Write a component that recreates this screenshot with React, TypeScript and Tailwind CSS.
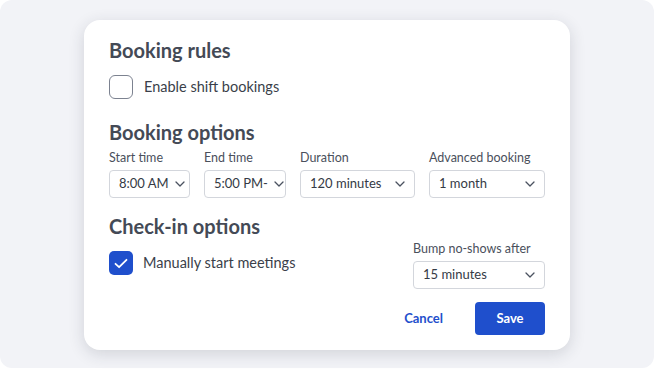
import React from "react";

function Chevron() {
	return (
		<svg width="10" height="6" viewBox="0 0 10 6" fill="none" className="shrink-0">
			<path d="M1 1l4 4 4-4" stroke="#4b5260" strokeWidth="1.3" strokeLinecap="round" strokeLinejoin="round" />
		</svg>
	);
}

function Select({ value, width }: { value: string; width: string }) {
	return (
		<div
			className={`${width} h-[28px] flex items-center justify-between gap-[6px] pl-[9px] pr-[9px] border border-[#d3d6dc] rounded-[4px] bg-white text-[13px] text-[#343a45]`}
		>
			<span className="whitespace-nowrap">{value}</span>
			<Chevron />
		</div>
	);
}

function Field({ label, value, width }: { label: string; value: string; width: string }) {
	return (
		<div className="flex flex-col gap-[4px]">
			<span className="text-[12.5px] leading-[16px] text-[#4a505c]">{label}</span>
			<Select value={value} width={width} />
		</div>
	);
}

export default function App() {
	return (
		<div className="w-[654px] h-[381px] bg-white" style={{ fontFamily: "Lato, 'Noto Sans', sans-serif" }}>
			<div className="h-[368px] bg-[#f2f3f7] rounded-[12px] pl-[84px] pt-[20px]">
				<div className="w-[486px] h-[330px] bg-white rounded-[16px] shadow-[0_4px_16px_rgba(40,45,60,0.16)] px-[25px] pt-[18px] flex flex-col">
					<h2 className="text-[20px] leading-[24px] font-bold text-[#444a56]">Booking rules</h2>
					<div className="flex items-center gap-[11px] mt-[13px]">
						<div className="w-[24px] h-[24px] rounded-[6px] border-[1.5px] border-[#7c8290] bg-white" />
						<span className="text-[14.5px] text-[#3a3f4a]">Enable shift bookings</span>
					</div>

					<h2 className="text-[20px] leading-[24px] font-bold text-[#444a56] mt-[21px]">Booking options</h2>
					<div className="flex gap-[14px] mt-[6px]">
						<Field label="Start time" value="8:00 AM" width="w-[81px]" />
						<Field label="End time" value="5:00 PM-" width="w-[82px]" />
						<Field label="Duration" value="120 minutes" width="w-[115px]" />
						<Field label="Advanced booking" value="1 month" width="w-[116px]" />
					</div>

					<h2 className="text-[20px] leading-[24px] font-bold text-[#444a56] mt-[16px]">Check-in options</h2>
					<div className="flex items-start justify-between mt-[3px]">
						<div className="flex items-center gap-[10px] mt-[10px]">
							<div className="w-[24px] h-[24px] rounded-[5px] bg-[#1f4fcc] flex items-center justify-center">
								<svg width="14" height="11" viewBox="0 0 14 11" fill="none">
									<path d="M1.5 5.8l3.6 3.4L12.5 1.8" stroke="white" strokeWidth="1.8" strokeLinecap="round" strokeLinejoin="round" />
								</svg>
							</div>
							<span className="text-[14.5px] text-[#3a3f4a]">Manually start meetings</span>
						</div>
						<Field label="Bump no-shows after" value="15 minutes" width="w-[132px]" />
					</div>

					<div className="flex justify-end items-center gap-[32px] mt-[13px]">
						<span className="text-[13px] font-bold text-[#1f4fcc]">Cancel</span>
						<button className="w-[70px] h-[33px] rounded-[4px] bg-[#1f4fcc] text-white text-[13px] font-bold">Save</button>
					</div>
				</div>
			</div>
		</div>
	);
}
